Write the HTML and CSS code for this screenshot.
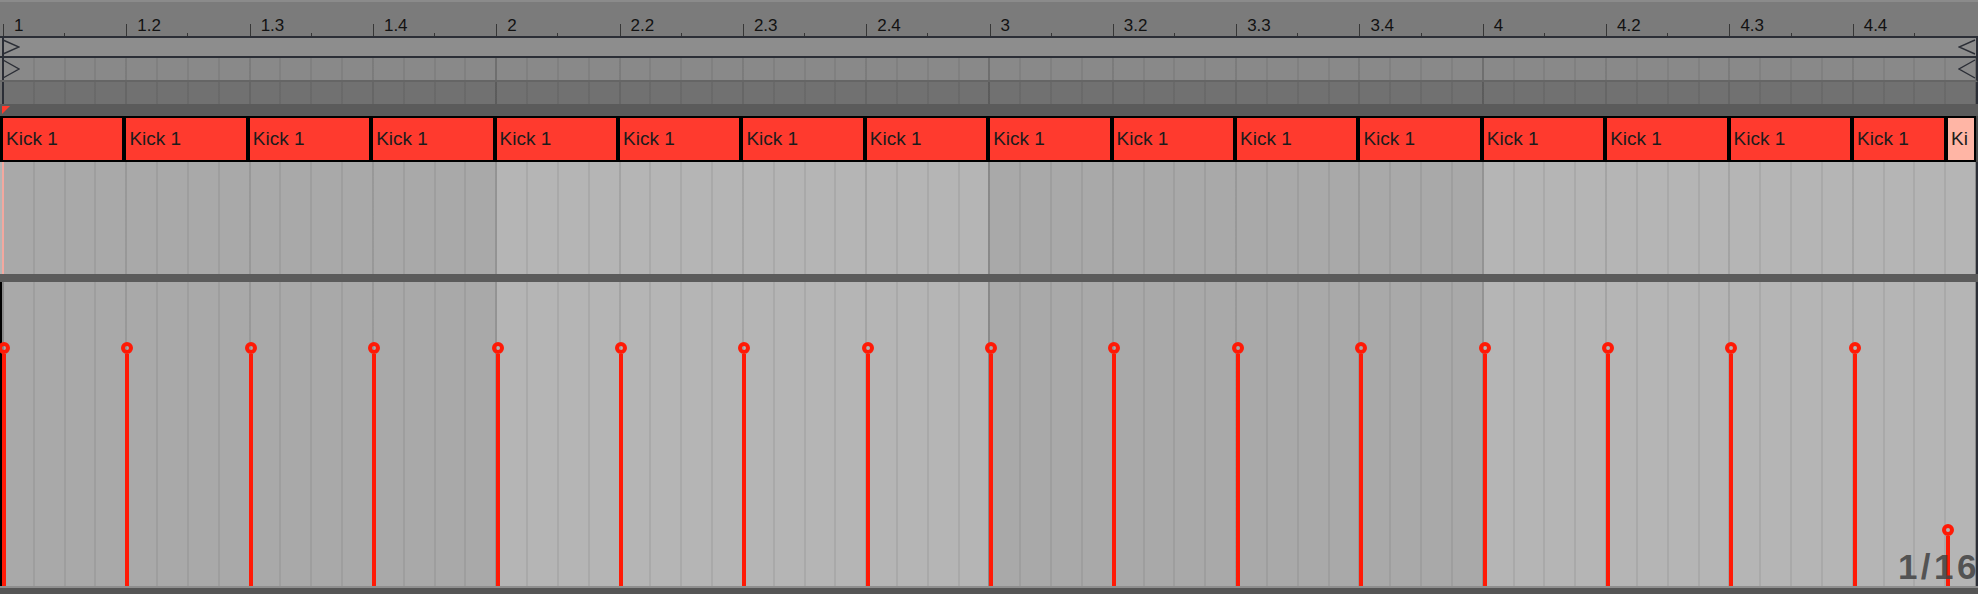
FILE: index.html
```html
<!DOCTYPE html>
<html lang="en">
<head>
 <meta charset="UTF-8">
 <title>Arrangement - Kick 1</title>
 <link rel="stylesheet" href="styles.css">
</head>
<body>
<div class="arranger">
 <div class="ruler">
  <div class="ruler-beat"><span>1</span></div>
  <div class="ruler-beat"><span>1.2</span></div>
  <div class="ruler-beat"><span>1.3</span></div>
  <div class="ruler-beat"><span>1.4</span></div>
  <div class="ruler-beat"><span>2</span></div>
  <div class="ruler-beat"><span>2.2</span></div>
  <div class="ruler-beat"><span>2.3</span></div>
  <div class="ruler-beat"><span>2.4</span></div>
  <div class="ruler-beat"><span>3</span></div>
  <div class="ruler-beat"><span>3.2</span></div>
  <div class="ruler-beat"><span>3.3</span></div>
  <div class="ruler-beat"><span>3.4</span></div>
  <div class="ruler-beat"><span>4</span></div>
  <div class="ruler-beat"><span>4.2</span></div>
  <div class="ruler-beat"><span>4.3</span></div>
  <div class="ruler-beat"><span>4.4</span></div>
 </div>

 <!-- loop brace -->
 <div class="loop-lane">
  <svg class="tri tri-start" width="18" height="16" viewBox="0 0 18 16"><path d="M1 1L17 8L1 15" /></svg>
  <svg class="tri" width="18" height="16" viewBox="0 0 18 16"><path d="M17 1L1 8L17 15" /></svg>
 </div>

 <!-- start / end markers -->
 <div class="marker-lane">
  <svg class="tri tri-start" width="18" height="20" viewBox="0 0 18 20"><path d="M1 1L17 10L1 19" /></svg>
  <svg class="tri" width="18" height="20" viewBox="0 0 18 20"><path d="M17 1L1 10L17 19" /></svg>
 </div>

 <div class="scene-lane"></div>

 <div class="playbar">
  <svg class="flag" width="8" height="8" viewBox="0 0 8 8"><path d="M0 0H8L0 8Z" /></svg>
 </div>

 <div class="clips">
  <div class="clip">Kick 1</div>
  <div class="clip">Kick 1</div>
  <div class="clip">Kick 1</div>
  <div class="clip">Kick 1</div>
  <div class="clip">Kick 1</div>
  <div class="clip">Kick 1</div>
  <div class="clip">Kick 1</div>
  <div class="clip">Kick 1</div>
  <div class="clip">Kick 1</div>
  <div class="clip">Kick 1</div>
  <div class="clip">Kick 1</div>
  <div class="clip">Kick 1</div>
  <div class="clip">Kick 1</div>
  <div class="clip">Kick 1</div>
  <div class="clip">Kick 1</div>
  <div class="clip">Kick 1</div>
  <div class="clip ghost">Ki</div>
 </div>

 <div class="clip-lane"></div>
 <div class="lane-sep"></div>

 <!-- velocity / envelope points, one per beat -->
 <div class="auto-lane">
  <div class="step"><div class="point"><div class="dot"></div><div class="stem" style="height: 232px"></div></div></div>
  <div class="step"><div class="point"><div class="dot"></div><div class="stem" style="height: 232px"></div></div></div>
  <div class="step"><div class="point"><div class="dot"></div><div class="stem" style="height: 232px"></div></div></div>
  <div class="step"><div class="point"><div class="dot"></div><div class="stem" style="height: 232px"></div></div></div>
  <div class="step"><div class="point"><div class="dot"></div><div class="stem" style="height: 232px"></div></div></div>
  <div class="step"><div class="point"><div class="dot"></div><div class="stem" style="height: 232px"></div></div></div>
  <div class="step"><div class="point"><div class="dot"></div><div class="stem" style="height: 232px"></div></div></div>
  <div class="step"><div class="point"><div class="dot"></div><div class="stem" style="height: 232px"></div></div></div>
  <div class="step"><div class="point"><div class="dot"></div><div class="stem" style="height: 232px"></div></div></div>
  <div class="step"><div class="point"><div class="dot"></div><div class="stem" style="height: 232px"></div></div></div>
  <div class="step"><div class="point"><div class="dot"></div><div class="stem" style="height: 232px"></div></div></div>
  <div class="step"><div class="point"><div class="dot"></div><div class="stem" style="height: 232px"></div></div></div>
  <div class="step"><div class="point"><div class="dot"></div><div class="stem" style="height: 232px"></div></div></div>
  <div class="step"><div class="point"><div class="dot"></div><div class="stem" style="height: 232px"></div></div></div>
  <div class="step"><div class="point"><div class="dot"></div><div class="stem" style="height: 232px"></div></div></div>
  <div class="step">
   <div class="point"><div class="dot"></div><div class="stem" style="height: 232px"></div></div>
   <div class="point" style="margin-left: 81px"><div class="dot"></div><div class="stem" style="height: 50px"></div></div>
  </div>
  <div class="grid-label">1/16</div>
 </div>

 <div class="bottom-bar"></div>
</div>
</body>
</html>
```

FILE: styles.css
```css
* {
 box-sizing: border-box;
 }
html, body {
 margin: 0;
 }
body {
 width: 1978px;
 height: 594px;
 overflow: hidden;
 background: #555;
 font-family: "Liberation Sans", Arial, sans-serif;
 /* grid lines: 16ths, beats, bars (origin at x=2) */
 --six: repeating-linear-gradient(to right, rgba(0, 0, 0, .065) 2px 4px, transparent 4px 32.828125px);
 --beat: repeating-linear-gradient(to right, rgba(0, 0, 0, .035) 2px 4px, transparent 4px 125.3125px);
 --bar: repeating-linear-gradient(to right, rgba(0, 0, 0, .1) 2px 4px, transparent 4px 495.25px);
 --shade: repeating-linear-gradient(to right, #a9a9a9 2px 495.25px, #b5b5b5 495.25px 988.5px);
 --edge: linear-gradient(#2b2e36, #2b2e36) 2px 0 / 2px 100% no-repeat;
 }
.arranger {
 display: flex;
 flex-direction: column;
 width: 1978px;
 height: 594px;
 }

/* beat ruler */
.ruler {
 height: 36px;
 border-top: 2px solid #8b8b8b;
 background: #7b7b7b;
 padding: 0 2px 0 3px;
 display: grid;
 grid-template-columns: repeat(16, 1fr);
 }
.ruler-beat {
 background:
  linear-gradient(#363636, #363636) 0 100% / 1px 12px no-repeat,
  linear-gradient(#363636, #363636) 50% 100% / 1px 3px no-repeat;
 }
.ruler-beat span {
 display: block;
 padding: 15px 0 0 11px;
 font-size: 17px;
 line-height: 17px;
 color: #121212;
 }

/* upper lanes */
.loop-lane,
.marker-lane {
 display: flex;
 justify-content: space-between;
 align-items: center;
 border-right: 2px solid #2b2e36;
 }
.loop-lane {
 height: 22px;
 border-top: 2px solid #2b2e36;
 border-bottom: 2px solid #2b2e36;
 background: var(--edge), #8d8d8d;
 }
.marker-lane {
 height: 24px;
 border-bottom: 2px solid #656565;
 background: var(--edge), var(--six), var(--beat), var(--bar), #898989;
 }
.scene-lane {
 height: 22px;
 border-right: 2px solid #2b2e36;
 background: var(--edge), var(--six), var(--beat), var(--bar), #717171;
 }
.tri {
 display: block;
 }
.tri path {
 fill: none;
 stroke: #2b2e36;
 stroke-width: 1.4;
 }
.tri-start {
 margin-left: 2px;
 }
.playbar {
 height: 12px;
 background: #5b5b5b;
 padding: 2px 0 0 2px;
 }
.flag {
 display: block;
 }
.flag path {
 fill: #ff3b2d;
 }

/* clips */
.clips {
 height: 46px;
 display: grid;
 grid-template-columns: repeat(15, 1fr) 94px 30px;
 padding: 0 2px 0 1px;
 background: linear-gradient(#000, #000) 0 0 / 2px 100% no-repeat, #4a4a4a;
 }
.clip {
 border: 2px solid #000;
 background: #ff3a2e;
 color: #1c1c1c;
 font-size: 19px;
 line-height: 42px;
 padding-left: 3px;
 white-space: nowrap;
 overflow: hidden;
 }
.clip.ghost {
 background: #ffb5a5;
 }
.clip-lane {
 height: 112px;
 border-right: 2px solid #2b2e36;
 background:
  linear-gradient(#f3a89f, #f3a89f) 2px 0 / 2px 100% no-repeat,
  var(--six), var(--beat), var(--bar), var(--shade);
 }
.lane-sep {
 height: 8px;
 background: #5b5b5b;
 }

/* envelope lane */
.auto-lane {
 position: relative;
 height: 304px;
 display: grid;
 grid-template-columns: repeat(16, 1fr);
 padding-left: 2px;
 border-right: 2px solid #2b2e36;
 background:
  linear-gradient(#000, #000) 0 0 / 2px 100% no-repeat,
  var(--six), var(--beat), var(--bar), var(--shade);
 }
.step {
 display: flex;
 align-items: flex-end;
 min-width: 0;
 }
.point {
 flex: none;
 display: flex;
 flex-direction: column;
 align-items: center;
 width: 12px;
 margin-left: -4px;
 }
.dot {
 width: 12px;
 height: 12px;
 border: 4px solid #ff1a06;
 border-radius: 50%;
 }
.stem {
 width: 4px;
 background: #ff1a06;
 }
.grid-label {
 position: absolute;
 right: -4px;
 bottom: 2px;
 font-size: 35px;
 line-height: 35px;
 font-weight: bold;
 letter-spacing: 3.5px;
 color: rgba(66, 66, 66, .85);
 }
.bottom-bar {
 height: 8px;
 border-top: 2px solid #8e8e8e;
 background: #555;
 }
```
